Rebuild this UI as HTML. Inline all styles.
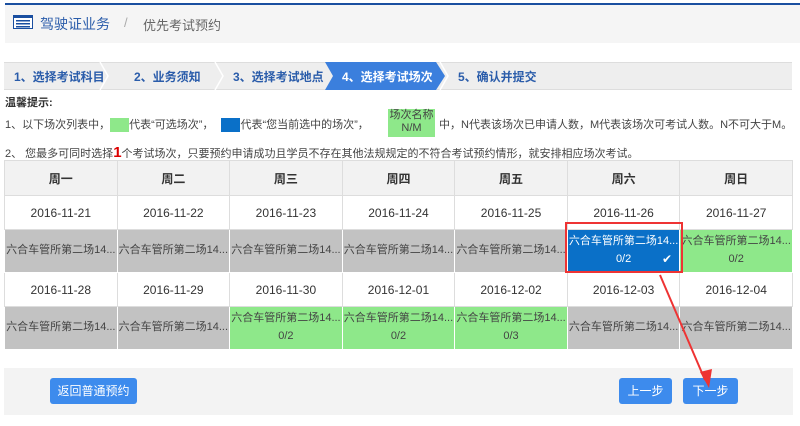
<!DOCTYPE html>
<html><head><meta charset="utf-8"><style>
*{margin:0;padding:0;box-sizing:border-box}
body{width:800px;height:426px;background:#fff;font-family:"Liberation Sans","Noto Sans CJK SC",sans-serif;font-size:12px;color:#333;position:relative;overflow:hidden}
.abs{position:absolute}
.hdr{left:5px;top:3px;width:795px;height:40px;background:#f5f5f5;border-top:2px solid #1a4fa0}
.steps{left:4px;top:62px;width:788px;height:28px;background:#eee;border-top:1px solid #ddd;border-bottom:1px solid #ddd}
.st{position:absolute;top:68px;font-size:12px;color:#2a5caa;font-weight:bold}
table{position:absolute;left:4px;top:160px;border-collapse:collapse;width:789px;table-layout:fixed}
td{border:1px solid #ddd;text-align:center;font-size:12px;color:#333;overflow:hidden;white-space:nowrap;padding:0}
.h td{height:35px;background:#f2f2f2;font-weight:bold}
.d td{height:34px}
.c td{height:43px;background:#c2c2c2;border:1px solid #fff;color:#444;font-size:11px;vertical-align:top}
.c td div{height:41px;line-height:41px;overflow:hidden}
.c td div.two{line-height:18px;padding-top:2px}
.c td.g{background:#8ee88a}
.c td.s{background:#0a70c8;color:#fff}
.btn{position:absolute;background:#3d8bed;color:#fff;border-radius:3px;text-align:center;font-size:12px;line-height:26px;top:378px;height:26px}
</style></head><body>
<div class="abs hdr"></div>
<svg class="abs" style="left:13px;top:15px" width="20" height="14"><rect x="0.5" y="0.5" width="19" height="13" fill="#fff" stroke="#1a4fa0"/><rect x="0" y="0" width="20" height="3" fill="#1a4fa0"/><rect x="3" y="5" width="14" height="1.5" fill="#1a4fa0"/><rect x="3" y="8" width="14" height="1.5" fill="#1a4fa0"/><rect x="3" y="11" width="14" height="1.5" fill="#1a4fa0"/></svg>
<div class="abs" style="left:40px;top:14px;font-size:14px;color:#2a5caa">驾驶证业务</div>
<div class="abs" style="left:124px;top:15px;font-size:13px;color:#aaa">/</div>
<div class="abs" style="left:143px;top:15px;font-size:13px;color:#666">优先考试预约</div>
<div class="abs steps"></div>
<svg class="abs" style="left:0;top:62px" width="800" height="29"><g stroke="#fff" stroke-width="1.5" fill="none"><path d="M100 0 L108 14 L100 28"/><path d="M215 0 L223 14 L215 28"/><path d="M440 0 L448 14 L440 28"/></g><path d="M325 0 L436 0 L445 14 L436 28 L325 28 L333 14 Z" fill="#3b7fdd"/></svg>
<div class="st" style="left:14px">1、选择考试科目</div>
<div class="st" style="left:134px">2、业务须知</div>
<div class="st" style="left:233px">3、选择考试地点</div>
<div class="st" style="left:342px;color:#fff">4、选择考试场次</div>
<div class="st" style="left:458px">5、确认并提交</div>
<div class="abs" style="left:5px;top:94px;font-size:11px;font-weight:bold">温馨提示:</div>
<div class="abs" style="left:5px;top:116px;font-size:11px;color:#444">1、以下场次列表中，<span style="display:inline-block;width:19px;height:14px;background:#8ee88a;vertical-align:middle"></span>代表“可选场次”，<span style="display:inline-block;width:19px;height:14px;background:#0a70c8;vertical-align:middle;margin-left:8px"></span>代表“您当前选中的场次”，</div>
<div class="abs" style="left:388px;top:109px;width:47px;height:28px;background:#8ee88a;font-size:11px;color:#444;text-align:center;line-height:13px">场次名称<br>N/M</div>
<div class="abs" style="left:439px;top:116px;font-size:11px;color:#444">中，N代表该场次已申请人数，M代表该场次可考试人数。N不可大于M。</div>
<div class="abs" style="left:5px;top:144px;font-size:11px;color:#444">2、 您最多可同时选择<b style="color:#d00;font-size:15px">1</b>个考试场次，只要预约申请成功且学员不存在其他法规规定的不符合考试预约情形，就安排相应场次考试。</div>
<table>
<tr class="h"><td>周一</td><td>周二</td><td>周三</td><td>周四</td><td>周五</td><td>周六</td><td>周日</td></tr>
<tr class="d"><td>2016-11-21</td><td>2016-11-22</td><td>2016-11-23</td><td>2016-11-24</td><td>2016-11-25</td><td>2016-11-26</td><td>2016-11-27</td></tr>
<tr class="c"><td><div>六合车管所第二场14...</div></td><td><div>六合车管所第二场14...</div></td><td><div>六合车管所第二场14...</div></td><td><div>六合车管所第二场14...</div></td><td><div>六合车管所第二场14...</div></td><td class="s"><div class="two">六合车管所第二场14...<br>0/2</div></td><td class="g"><div class="two">六合车管所第二场14...<br>0/2</div></td></tr>
<tr class="d"><td>2016-11-28</td><td>2016-11-29</td><td>2016-11-30</td><td>2016-12-01</td><td>2016-12-02</td><td>2016-12-03</td><td>2016-12-04</td></tr>
<tr class="c"><td><div>六合车管所第二场14...</div></td><td><div>六合车管所第二场14...</div></td><td class="g"><div class="two">六合车管所第二场14...<br>0/2</div></td><td class="g"><div class="two">六合车管所第二场14...<br>0/2</div></td><td class="g"><div class="two">六合车管所第二场14...<br>0/3</div></td><td><div>六合车管所第二场14...</div></td><td><div>六合车管所第二场14...</div></td></tr>
</table>
<div class="abs" style="left:662px;top:252px;color:#fff;font-size:12px">✔</div>
<div class="abs" style="left:565px;top:222px;width:118px;height:51px;border:2px solid #e33"></div>
<div class="abs" style="left:4px;top:368px;width:789px;height:47px;background:#f3f3f3"></div>
<div class="btn" style="left:50px;width:87px">返回普通预约</div>
<div class="btn" style="left:619px;width:53px">上一步</div>
<div class="btn" style="left:683px;width:55px">下一步</div>
<svg class="abs" style="left:0;top:0" width="800" height="426"><line x1="660" y1="275" x2="705" y2="380" stroke="#e33" stroke-width="2"/><path d="M700 372 L709 388 L712 369 Z" fill="#e33"/></svg>
</body></html>
